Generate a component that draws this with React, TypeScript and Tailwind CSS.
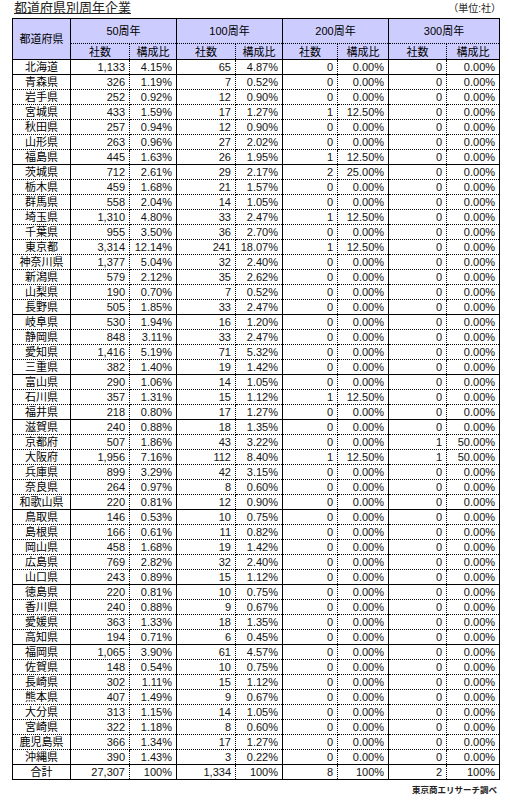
import React from "react";

type Row = [string, string, string, string, string, string, string, string, string];

const rows: Row[] = [
  ["北海道", "1,133", "4.15%", "65", "4.87%", "0", "0.00%", "0", "0.00%"],
  ["青森県", "326", "1.19%", "7", "0.52%", "0", "0.00%", "0", "0.00%"],
  ["岩手県", "252", "0.92%", "12", "0.90%", "0", "0.00%", "0", "0.00%"],
  ["宮城県", "433", "1.59%", "17", "1.27%", "1", "12.50%", "0", "0.00%"],
  ["秋田県", "257", "0.94%", "12", "0.90%", "0", "0.00%", "0", "0.00%"],
  ["山形県", "263", "0.96%", "27", "2.02%", "0", "0.00%", "0", "0.00%"],
  ["福島県", "445", "1.63%", "26", "1.95%", "1", "12.50%", "0", "0.00%"],
  ["茨城県", "712", "2.61%", "29", "2.17%", "2", "25.00%", "0", "0.00%"],
  ["栃木県", "459", "1.68%", "21", "1.57%", "0", "0.00%", "0", "0.00%"],
  ["群馬県", "558", "2.04%", "14", "1.05%", "0", "0.00%", "0", "0.00%"],
  ["埼玉県", "1,310", "4.80%", "33", "2.47%", "1", "12.50%", "0", "0.00%"],
  ["千葉県", "955", "3.50%", "36", "2.70%", "0", "0.00%", "0", "0.00%"],
  ["東京都", "3,314", "12.14%", "241", "18.07%", "1", "12.50%", "0", "0.00%"],
  ["神奈川県", "1,377", "5.04%", "32", "2.40%", "0", "0.00%", "0", "0.00%"],
  ["新潟県", "579", "2.12%", "35", "2.62%", "0", "0.00%", "0", "0.00%"],
  ["山梨県", "190", "0.70%", "7", "0.52%", "0", "0.00%", "0", "0.00%"],
  ["長野県", "505", "1.85%", "33", "2.47%", "0", "0.00%", "0", "0.00%"],
  ["岐阜県", "530", "1.94%", "16", "1.20%", "0", "0.00%", "0", "0.00%"],
  ["静岡県", "848", "3.11%", "33", "2.47%", "0", "0.00%", "0", "0.00%"],
  ["愛知県", "1,416", "5.19%", "71", "5.32%", "0", "0.00%", "0", "0.00%"],
  ["三重県", "382", "1.40%", "19", "1.42%", "0", "0.00%", "0", "0.00%"],
  ["富山県", "290", "1.06%", "14", "1.05%", "0", "0.00%", "0", "0.00%"],
  ["石川県", "357", "1.31%", "15", "1.12%", "1", "12.50%", "0", "0.00%"],
  ["福井県", "218", "0.80%", "17", "1.27%", "0", "0.00%", "0", "0.00%"],
  ["滋賀県", "240", "0.88%", "18", "1.35%", "0", "0.00%", "0", "0.00%"],
  ["京都府", "507", "1.86%", "43", "3.22%", "0", "0.00%", "1", "50.00%"],
  ["大阪府", "1,956", "7.16%", "112", "8.40%", "1", "12.50%", "1", "50.00%"],
  ["兵庫県", "899", "3.29%", "42", "3.15%", "0", "0.00%", "0", "0.00%"],
  ["奈良県", "264", "0.97%", "8", "0.60%", "0", "0.00%", "0", "0.00%"],
  ["和歌山県", "220", "0.81%", "12", "0.90%", "0", "0.00%", "0", "0.00%"],
  ["鳥取県", "146", "0.53%", "10", "0.75%", "0", "0.00%", "0", "0.00%"],
  ["島根県", "166", "0.61%", "11", "0.82%", "0", "0.00%", "0", "0.00%"],
  ["岡山県", "458", "1.68%", "19", "1.42%", "0", "0.00%", "0", "0.00%"],
  ["広島県", "769", "2.82%", "32", "2.40%", "0", "0.00%", "0", "0.00%"],
  ["山口県", "243", "0.89%", "15", "1.12%", "0", "0.00%", "0", "0.00%"],
  ["徳島県", "220", "0.81%", "10", "0.75%", "0", "0.00%", "0", "0.00%"],
  ["香川県", "240", "0.88%", "9", "0.67%", "0", "0.00%", "0", "0.00%"],
  ["愛媛県", "363", "1.33%", "18", "1.35%", "0", "0.00%", "0", "0.00%"],
  ["高知県", "194", "0.71%", "6", "0.45%", "0", "0.00%", "0", "0.00%"],
  ["福岡県", "1,065", "3.90%", "61", "4.57%", "0", "0.00%", "0", "0.00%"],
  ["佐賀県", "148", "0.54%", "10", "0.75%", "0", "0.00%", "0", "0.00%"],
  ["長崎県", "302", "1.11%", "15", "1.12%", "0", "0.00%", "0", "0.00%"],
  ["熊本県", "407", "1.49%", "9", "0.67%", "0", "0.00%", "0", "0.00%"],
  ["大分県", "313", "1.15%", "14", "1.05%", "0", "0.00%", "0", "0.00%"],
  ["宮崎県", "322", "1.18%", "8", "0.60%", "0", "0.00%", "0", "0.00%"],
  ["鹿児島県", "366", "1.34%", "17", "1.27%", "0", "0.00%", "0", "0.00%"],
  ["沖縄県", "390", "1.43%", "3", "0.22%", "0", "0.00%", "0", "0.00%"],
  ["合計", "27,307", "100%", "1,334", "100%", "8", "100%", "2", "100%"],
];

const solidAfter = new Set([0, 6, 16, 20, 23, 29, 34, 38, 46, 47]);
const widths = [58, 59, 47, 59, 47, 55, 51, 58, 53];

export default function App() {
  return (
    <div className="w-[510px] h-[802px] bg-white text-black font-['Liberation_Sans','Noto_Sans_CJK_JP',sans-serif]">
      <div className="flex h-[18px] items-start justify-between pl-[14px] pr-[9px]">
        <span className="text-[13px] leading-[16px] underline underline-offset-[1px] text-[#222]">
          都道府県別周年企業
        </span>
        <span className="mt-[3px] text-[10px] leading-[12px] text-[#222]">（単位:社）</span>
      </div>
      <table className="ml-[12px] w-[487px] table-fixed border-collapse border border-black">
        <colgroup>
          {widths.map((w, i) => (
            <col key={i} style={{ width: w }} />
          ))}
        </colgroup>
        <thead>
          <tr className="h-[25px] bg-[#ccccff]">
            <th
              rowSpan={2}
              className="border-0 border-r border-b border-black p-0 text-center text-[11px] font-normal leading-[12px]"
            >
              都道府県
            </th>
            {["50周年", "100周年", "200周年", "300周年"].map((g) => (
              <th
                key={g}
                colSpan={2}
                className="border-0 border-r border-b border-black [border-bottom-style:dotted] p-0 text-center text-[11px] font-normal leading-[12px]"
              >
                {g}
              </th>
            ))}
          </tr>
          <tr className="h-[16px] bg-[#ccccff]">
            {[0, 1, 2, 3].map((g) => (
              <React.Fragment key={g}>
                <th className="border-0 border-r border-b border-black [border-right-style:dotted] p-0 text-center text-[11px] font-normal leading-[12px]">
                  社数
                </th>
                <th className="border-0 border-r border-b border-black p-0 text-center text-[11px] font-normal leading-[12px]">
                  構成比
                </th>
              </React.Fragment>
            ))}
          </tr>
        </thead>
        <tbody>
          {rows.map((r, ri) => {
            const solid = solidAfter.has(ri);
            return (
              <tr key={ri} className="h-[15px]">
                {r.map((v, ci) => {
                  const dottedRight = ci % 2 === 1;
                  if (ci === 0) {
                    return (
                      <td
                        key={ci}
                        className={
                          solid
                            ? "border-0 border-r border-b border-black p-0 text-center text-[11px] leading-[13px]"
                            : "border-0 border-r border-b border-black [border-bottom-style:dotted] p-0 text-center text-[11px] leading-[13px]"
                        }
                      >
                        {v}
                      </td>
                    );
                  }
                  let cls = "border-0 border-r border-b border-black p-0 pr-[4px] text-right text-[11px] leading-[13px] text-[#111]";
                  if (dottedRight && solid) {
                    cls = "border-0 border-r border-b border-black [border-right-style:dotted] p-0 pr-[4px] text-right text-[11px] leading-[13px] text-[#111]";
                  } else if (dottedRight && !solid) {
                    cls = "border-0 border-r border-b border-black [border-right-style:dotted] [border-bottom-style:dotted] p-0 pr-[4px] text-right text-[11px] leading-[13px] text-[#111]";
                  } else if (!dottedRight && !solid) {
                    cls = "border-0 border-r border-b border-black [border-bottom-style:dotted] p-0 pr-[4px] text-right text-[11px] leading-[13px] text-[#111]";
                  }
                  return (
                    <td key={ci} className={cls}>
                      {v}
                    </td>
                  );
                })}
              </tr>
            );
          })}
        </tbody>
      </table>
      <div className="mt-[4px] pr-[13px] text-right text-[8.5px] font-bold leading-[12px] text-[#222]">
        東京商エリサーチ調べ
      </div>
    </div>
  );
}
